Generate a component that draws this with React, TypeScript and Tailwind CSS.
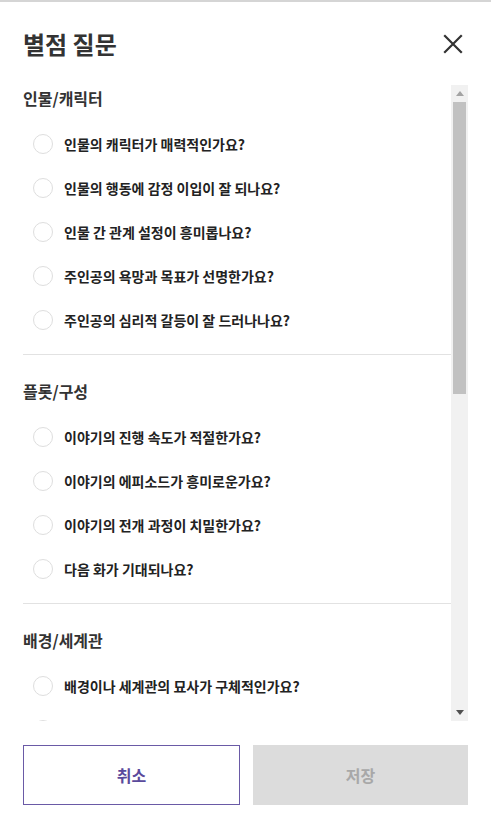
const sections = [
  {
    title: "인물/캐릭터",
    items: [
      "인물의 캐릭터가 매력적인가요?",
      "인물의 행동에 감정 이입이 잘 되나요?",
      "인물 간 관계 설정이 흥미롭나요?",
      "주인공의 욕망과 목표가 선명한가요?",
      "주인공의 심리적 갈등이 잘 드러나나요?",
    ],
  },
  {
    title: "플롯/구성",
    items: [
      "이야기의 진행 속도가 적절한가요?",
      "이야기의 에피소드가 흥미로운가요?",
      "이야기의 전개 과정이 치밀한가요?",
      "다음 화가 기대되나요?",
    ],
  },
  {
    title: "배경/세계관",
    items: [
      "배경이나 세계관의 묘사가 구체적인가요?",
      "배경 설정이 이야기와 잘 어우러지나요?",
    ],
  },
];

export default function App() {
  return (
    <div className="w-[491px] h-[825px] bg-white border-t-2 border-[#d5d5d5] px-[23px] flex flex-col font-['Noto_Sans_CJK_KR','Noto_Sans',sans-serif]">
      {/* Header */}
      <div className="h-[83px] shrink-0 flex items-center justify-between">
        <h1 className="text-[24px] font-bold text-[#333] leading-8">별점 질문</h1>
        <button className="w-[24px] h-[24px] flex items-center justify-center mr-[3px]">
          <svg width="20" height="20" viewBox="0 0 20 20" fill="none">
            <path d="M2 2l16 16M18 2L2 18" stroke="#333" strokeWidth="2.2" strokeLinecap="square" />
          </svg>
        </button>
      </div>

      {/* Question list + scrollbar */}
      <div className="h-[636px] shrink-0 flex">
        <div className="flex-1 overflow-hidden pt-px">
          {sections.map((section, i) => (
            <div
              key={section.title}
              className={`${i === 0 ? "" : "pt-6"} ${i === sections.length - 1 ? "" : "pb-3 border-b border-[#e2e2e2]"}`}
            >
              <h2 className="h-6 leading-6 mb-3 text-[16px] font-bold text-[#333]">{section.title}</h2>
              {section.items.map((q) => (
                <label key={q} className="h-11 flex items-center pl-[10px] gap-[11px] cursor-pointer">
                  <span className="w-[20px] h-[20px] rounded-full border border-[#dedede] bg-white shrink-0" />
                  <span className="text-[14px] font-bold text-[#222]">{q}</span>
                </label>
              ))}
            </div>
          ))}
        </div>

        {/* Scrollbar */}
        <div className="w-[17px] shrink-0 bg-[#f1f1f1] flex flex-col">
          <div className="h-[17px] flex items-center justify-center">
            <svg width="8" height="5" viewBox="0 0 8 5">
              <path d="M4 0L8 5H0z" fill="#a3a3a3" />
            </svg>
          </div>
          <div className="flex-1 px-[2px]">
            <div className="h-[292px] bg-[#c1c1c1]" />
          </div>
          <div className="h-[17px] flex items-center justify-center">
            <svg width="8" height="5" viewBox="0 0 8 5">
              <path d="M0 0H8L4 5z" fill="#505050" />
            </svg>
          </div>
        </div>
      </div>

      {/* Footer buttons */}
      <div className="mt-[24px] flex gap-[13px]">
        <button className="flex-1 h-[60px] border border-[#6a5aa6] text-[#5a4a9c] text-[16px] font-bold">
          취소
        </button>
        <button className="flex-1 h-[60px] bg-[#dcdcdc] text-[#a8a8a8] text-[16px] font-bold">
          저장
        </button>
      </div>
    </div>
  );
}
